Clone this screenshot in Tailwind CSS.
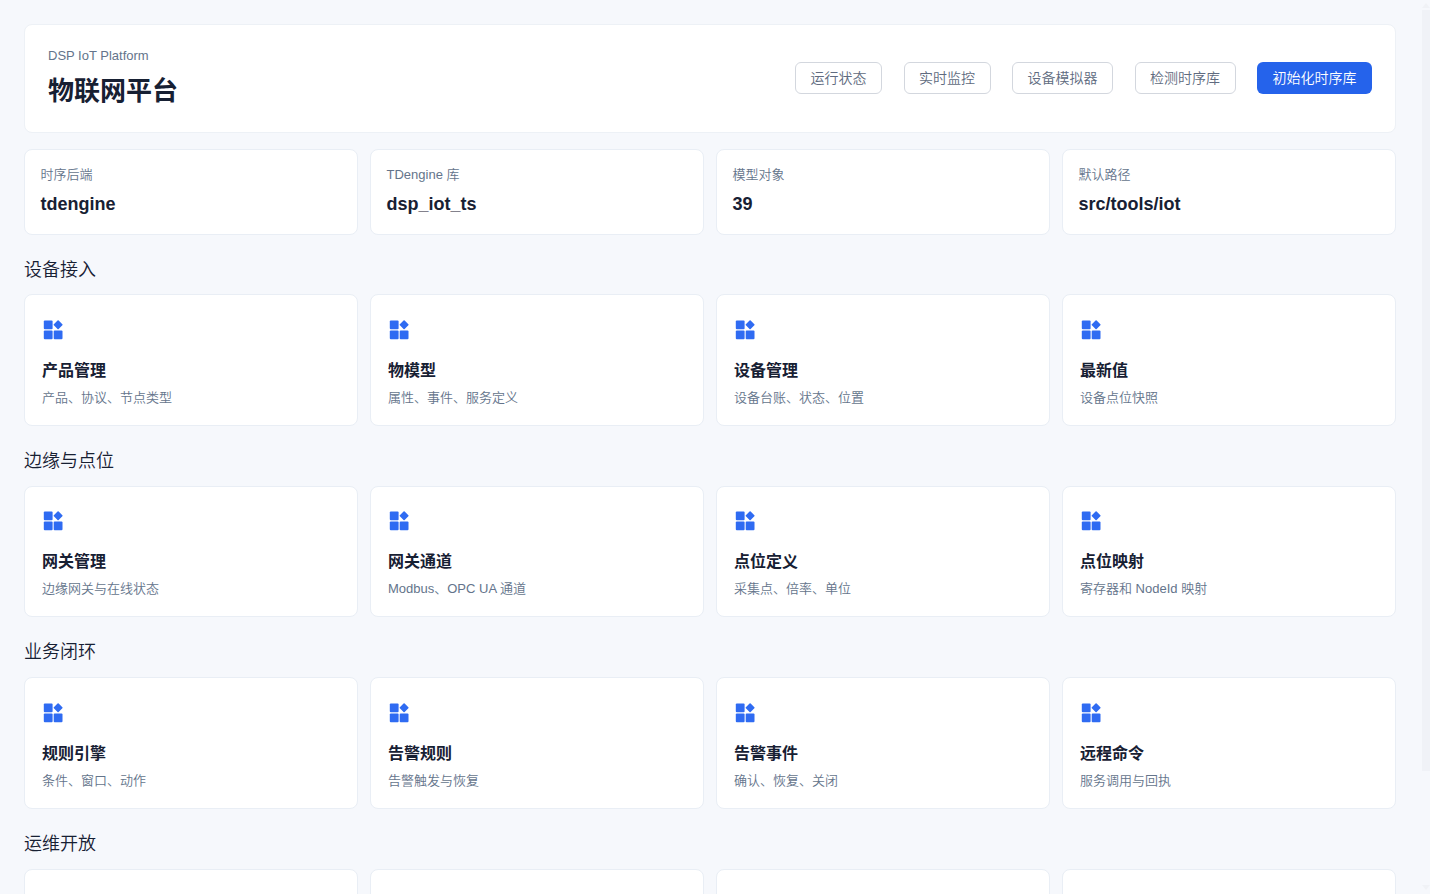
<!DOCTYPE html>
<html lang="zh-CN">
<head>
  <meta charset="UTF-8">
  <title>物联网平台</title>
  <script src="https://cdn.jsdelivr.net/npm/@tailwindcss/browser@4"></script>
</head>
<body class="h-screen overflow-hidden bg-[#f6f8fc] font-['Liberation_Sans','Noto_Sans_CJK_SC',sans-serif] text-[#172033]">
  <svg class="hidden">
    <symbol id="grid-icon" viewBox="0 0 20 20">
      <rect x="0.8" y="0.5" width="8.8" height="8.8" rx="1" />
      <rect x="0.8" y="10.4" width="8.8" height="8.8" rx="1" />
      <rect x="10.7" y="10.4" width="8.8" height="8.8" rx="1" />
      <rect x="11.7" y="1.4" width="6.8" height="6.8" rx="0.8" transform="rotate(45 15.1 4.8)" />
    </symbol>
  </svg>

  <div class="flex h-full">
    <main class="h-full flex-1 overflow-hidden p-6">
      <header class="flex h-[109px] items-center justify-between rounded-lg border border-[#edf1f6] bg-white px-[23px]">
        <div class="pt-px">
          <p class="text-[13px] leading-5 text-[#64748b]">DSP IoT Platform</p>
          <h1 class="mt-2 mb-1 text-[26px] leading-[34px] font-bold">物联网平台</h1>
        </div>
        <div class="flex gap-[21.5px] pb-0.5 text-sm font-[350] text-[#606b80]">
          <button class="h-8 w-[87px] rounded-md border border-[#d3d7de]">运行状态</button>
          <button class="h-8 w-[87px] rounded-md border border-[#d3d7de]">实时监控</button>
          <button class="h-8 w-[101px] rounded-md border border-[#d3d7de]">设备模拟器</button>
          <button class="h-8 w-[101px] rounded-md border border-[#d3d7de]">检测时序库</button>
          <button class="h-8 w-[115px] rounded-md bg-[#2563eb] text-white">初始化时序库</button>
        </div>
      </header>

      <div class="mt-4 grid grid-cols-4 gap-3">
        <div class="h-[86px] rounded-lg border border-[#e9eef5] bg-white px-[15.5px] pt-[15px]">
          <p class="text-[13px] leading-5 font-[350] text-[#64748b]">时序后端</p>
          <p class="mt-[7px] text-lg leading-6 font-bold">tdengine</p>
        </div>
        <div class="h-[86px] rounded-lg border border-[#e9eef5] bg-white px-[15.5px] pt-[15px]">
          <p class="text-[13px] leading-5 font-[350] text-[#64748b]">TDengine 库</p>
          <p class="mt-[7px] text-lg leading-6 font-bold">dsp_iot_ts</p>
        </div>
        <div class="h-[86px] rounded-lg border border-[#e9eef5] bg-white px-[15.5px] pt-[15px]">
          <p class="text-[13px] leading-5 font-[350] text-[#64748b]">模型对象</p>
          <p class="mt-[7px] text-lg leading-6 font-bold">39</p>
        </div>
        <div class="h-[86px] rounded-lg border border-[#e9eef5] bg-white px-[15.5px] pt-[15px]">
          <p class="text-[13px] leading-5 font-[350] text-[#64748b]">默认路径</p>
          <p class="mt-[7px] text-lg leading-6 font-bold">src/tools/iot</p>
        </div>
      </div>

      <section class="mt-[22.8px]">
        <h2 class="mb-[11.1px] text-lg leading-[25.5px] font-[350]">设备接入</h2>
        <div class="grid grid-cols-4 gap-3">
          <div class="h-[131.4px] rounded-lg border border-[#e9eef5] bg-white px-[17px] pt-[24.2px]">
            <svg class="ml-px size-5 fill-[#2f6bf2]"><use href="#grid-icon" /></svg>
            <h3 class="mt-[19.2px] text-base leading-6 font-bold">产品管理</h3>
            <p class="mt-[4.8px] text-[13px] leading-5 font-[350] text-[#64748b]">产品、协议、节点类型</p>
          </div>
          <div class="h-[131.4px] rounded-lg border border-[#e9eef5] bg-white px-[17px] pt-[24.2px]">
            <svg class="ml-px size-5 fill-[#2f6bf2]"><use href="#grid-icon" /></svg>
            <h3 class="mt-[19.2px] text-base leading-6 font-bold">物模型</h3>
            <p class="mt-[4.8px] text-[13px] leading-5 font-[350] text-[#64748b]">属性、事件、服务定义</p>
          </div>
          <div class="h-[131.4px] rounded-lg border border-[#e9eef5] bg-white px-[17px] pt-[24.2px]">
            <svg class="ml-px size-5 fill-[#2f6bf2]"><use href="#grid-icon" /></svg>
            <h3 class="mt-[19.2px] text-base leading-6 font-bold">设备管理</h3>
            <p class="mt-[4.8px] text-[13px] leading-5 font-[350] text-[#64748b]">设备台账、状态、位置</p>
          </div>
          <div class="h-[131.4px] rounded-lg border border-[#e9eef5] bg-white px-[17px] pt-[24.2px]">
            <svg class="ml-px size-5 fill-[#2f6bf2]"><use href="#grid-icon" /></svg>
            <h3 class="mt-[19.2px] text-base leading-6 font-bold">最新值</h3>
            <p class="mt-[4.8px] text-[13px] leading-5 font-[350] text-[#64748b]">设备点位快照</p>
          </div>
        </div>
      </section>

      <section class="mt-[23.1px]">
        <h2 class="mb-[11.5px] text-lg leading-[25.5px] font-[350]">边缘与点位</h2>
        <div class="grid grid-cols-4 gap-3">
          <div class="h-[131.4px] rounded-lg border border-[#e9eef5] bg-white px-[17px] pt-[24.2px]">
            <svg class="ml-px size-5 fill-[#2f6bf2]"><use href="#grid-icon" /></svg>
            <h3 class="mt-[19.2px] text-base leading-6 font-bold">网关管理</h3>
            <p class="mt-[4.8px] text-[13px] leading-5 font-[350] text-[#64748b]">边缘网关与在线状态</p>
          </div>
          <div class="h-[131.4px] rounded-lg border border-[#e9eef5] bg-white px-[17px] pt-[24.2px]">
            <svg class="ml-px size-5 fill-[#2f6bf2]"><use href="#grid-icon" /></svg>
            <h3 class="mt-[19.2px] text-base leading-6 font-bold">网关通道</h3>
            <p class="mt-[4.8px] text-[13px] leading-5 font-[350] text-[#64748b]">Modbus、OPC UA 通道</p>
          </div>
          <div class="h-[131.4px] rounded-lg border border-[#e9eef5] bg-white px-[17px] pt-[24.2px]">
            <svg class="ml-px size-5 fill-[#2f6bf2]"><use href="#grid-icon" /></svg>
            <h3 class="mt-[19.2px] text-base leading-6 font-bold">点位定义</h3>
            <p class="mt-[4.8px] text-[13px] leading-5 font-[350] text-[#64748b]">采集点、倍率、单位</p>
          </div>
          <div class="h-[131.4px] rounded-lg border border-[#e9eef5] bg-white px-[17px] pt-[24.2px]">
            <svg class="ml-px size-5 fill-[#2f6bf2]"><use href="#grid-icon" /></svg>
            <h3 class="mt-[19.2px] text-base leading-6 font-bold">点位映射</h3>
            <p class="mt-[4.8px] text-[13px] leading-5 font-[350] text-[#64748b]">寄存器和 NodeId 映射</p>
          </div>
        </div>
      </section>

      <section class="mt-[23.1px]">
        <h2 class="mb-[11.5px] text-lg leading-[25.5px] font-[350]">业务闭环</h2>
        <div class="grid grid-cols-4 gap-3">
          <div class="h-[131.4px] rounded-lg border border-[#e9eef5] bg-white px-[17px] pt-[24.2px]">
            <svg class="ml-px size-5 fill-[#2f6bf2]"><use href="#grid-icon" /></svg>
            <h3 class="mt-[19.2px] text-base leading-6 font-bold">规则引擎</h3>
            <p class="mt-[4.8px] text-[13px] leading-5 font-[350] text-[#64748b]">条件、窗口、动作</p>
          </div>
          <div class="h-[131.4px] rounded-lg border border-[#e9eef5] bg-white px-[17px] pt-[24.2px]">
            <svg class="ml-px size-5 fill-[#2f6bf2]"><use href="#grid-icon" /></svg>
            <h3 class="mt-[19.2px] text-base leading-6 font-bold">告警规则</h3>
            <p class="mt-[4.8px] text-[13px] leading-5 font-[350] text-[#64748b]">告警触发与恢复</p>
          </div>
          <div class="h-[131.4px] rounded-lg border border-[#e9eef5] bg-white px-[17px] pt-[24.2px]">
            <svg class="ml-px size-5 fill-[#2f6bf2]"><use href="#grid-icon" /></svg>
            <h3 class="mt-[19.2px] text-base leading-6 font-bold">告警事件</h3>
            <p class="mt-[4.8px] text-[13px] leading-5 font-[350] text-[#64748b]">确认、恢复、关闭</p>
          </div>
          <div class="h-[131.4px] rounded-lg border border-[#e9eef5] bg-white px-[17px] pt-[24.2px]">
            <svg class="ml-px size-5 fill-[#2f6bf2]"><use href="#grid-icon" /></svg>
            <h3 class="mt-[19.2px] text-base leading-6 font-bold">远程命令</h3>
            <p class="mt-[4.8px] text-[13px] leading-5 font-[350] text-[#64748b]">服务调用与回执</p>
          </div>
        </div>
      </section>

      <section class="mt-[23.1px]">
        <h2 class="mb-[11.5px] text-lg leading-[25.5px] font-[350]">运维开放</h2>
        <div class="grid grid-cols-4 gap-3">
          <div class="h-[131.4px] rounded-lg border border-[#e9eef5] bg-white"></div>
          <div class="h-[131.4px] rounded-lg border border-[#e9eef5] bg-white"></div>
          <div class="h-[131.4px] rounded-lg border border-[#e9eef5] bg-white"></div>
          <div class="h-[131.4px] rounded-lg border border-[#e9eef5] bg-white"></div>
        </div>
      </section>
    </main>

    <!-- scrollbar -->
    <div class="flex w-2.5 flex-col items-end justify-between pt-[3px] pb-[3px]">
      <svg class="h-1.5 w-2 fill-[#f0f2f6]" viewBox="0 0 8 6"><path d="M4 0L8 5H0Z" /></svg>
      <div class="mt-px mb-auto h-[761px] w-2 bg-[#f0f2f7]"></div>
      <svg class="h-1.5 w-2 fill-[#f0f2f6]" viewBox="0 0 8 6"><path d="M0 0H8L4 5Z" /></svg>
    </div>
  </div>
</body>
</html>
